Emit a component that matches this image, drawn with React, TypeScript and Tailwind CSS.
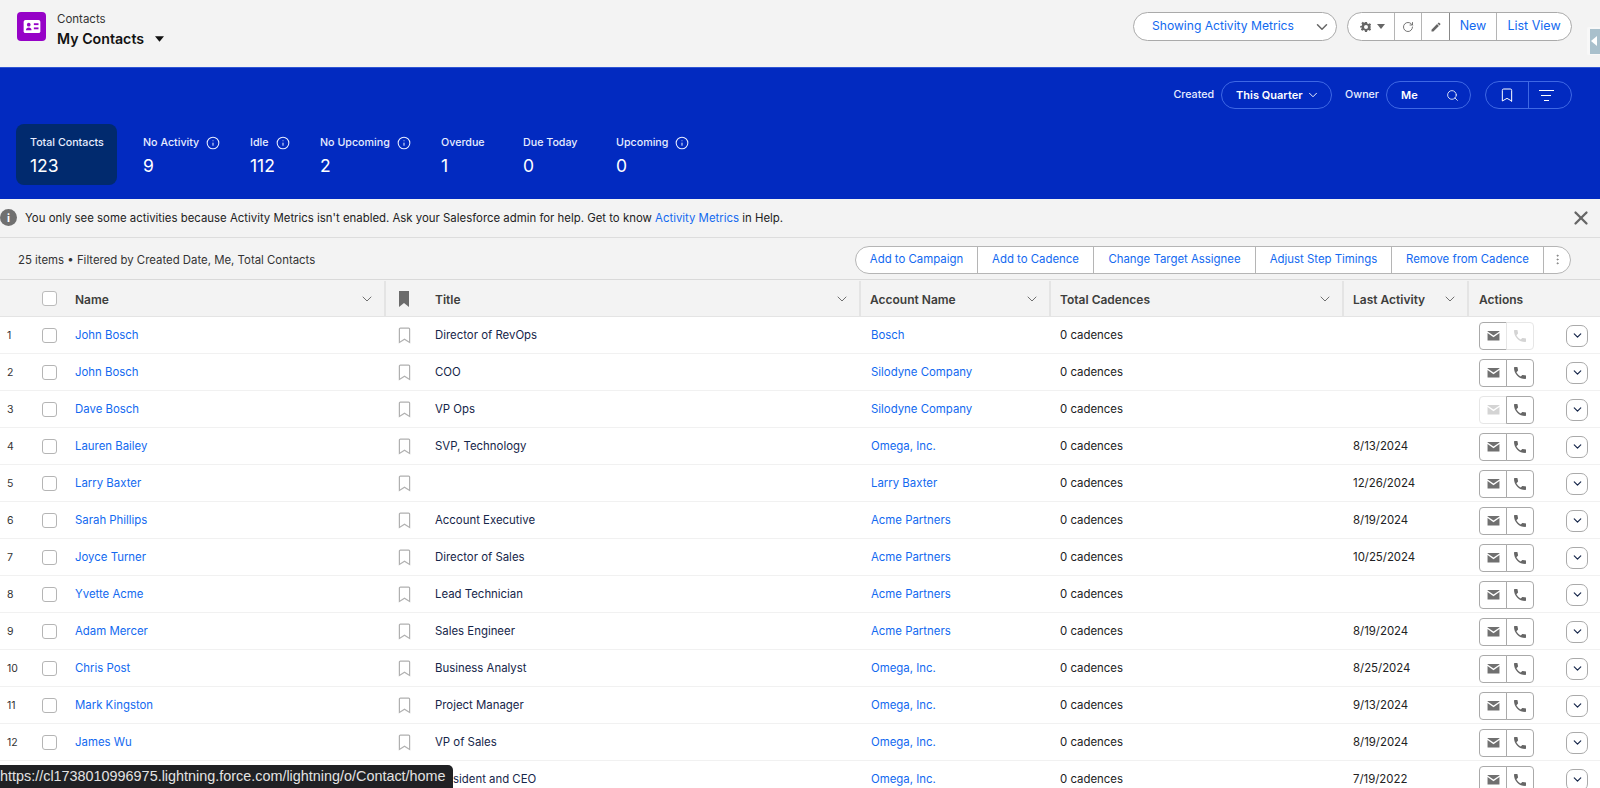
import { Bookmark, ChevronDown, Info, MoreVertical, RotateCw, Search, X } from "lucide-react";

const link = "text-[#1269f0]";
const cols = "grid grid-cols-[66px_318px_41px_434px_190px_293px_125px_133px]";

const rows = [
  { name: "John Bosch", title: "Director of RevOps", account: "Bosch", last: "", noPhone: true },
  { name: "John Bosch", title: "COO", account: "Silodyne Company", last: "" },
  { name: "Dave Bosch", title: "VP Ops", account: "Silodyne Company", last: "", noMail: true },
  { name: "Lauren Bailey", title: "SVP, Technology", account: "Omega, Inc.", last: "8/13/2024" },
  { name: "Larry Baxter", title: "", account: "Larry Baxter", last: "12/26/2024" },
  { name: "Sarah Phillips", title: "Account Executive", account: "Acme Partners", last: "8/19/2024" },
  { name: "Joyce Turner", title: "Director of Sales", account: "Acme Partners", last: "10/25/2024" },
  { name: "Yvette Acme", title: "Lead Technician", account: "Acme Partners", last: "" },
  { name: "Adam Mercer", title: "Sales Engineer", account: "Acme Partners", last: "8/19/2024" },
  { name: "Chris Post", title: "Business Analyst", account: "Omega, Inc.", last: "8/25/2024" },
  { name: "Mark Kingston", title: "Project Manager", account: "Omega, Inc.", last: "9/13/2024" },
  { name: "James Wu", title: "VP of Sales", account: "Omega, Inc.", last: "8/19/2024" },
  { name: "", title: "President and CEO", account: "Omega, Inc.", last: "7/19/2022" },
];

function Caret({ className }: { className: string }) {
  return (
    <svg viewBox="0 0 10 6" className={className} fill="currentColor">
      <path d="M0 0h10L5 6z" />
    </svg>
  );
}

function MailIcon({ className }: { className: string }) {
  return (
    <svg viewBox="0 0 24 24" className={className} fill="currentColor">
      <path d="M1 3.5h22v1.2L12 12 1 4.7z" />
      <path d="M1 7.5 12 15l11-7.500V21H1z" />
    </svg>
  );
}

function PhoneIcon({ className }: { className: string }) {
  return (
    <svg viewBox="0 0 24 24" className={className} fill="currentColor">
      <path d="M6.62 10.79c1.44 2.83 3.76 5.14 6.59 6.59l2.2-2.2c.27-.27.67-.36 1.02-.24 1.12.37 2.33.57 3.57.57.55 0 1 .45 1 1V20c0 .55-.45 1-1 1-9.39 0-17-7.61-17-17 0-.55.45-1 1-1h3.500c.55 0 1 .45 1 1 0 1.250.2 2.450.57 3.570.11.35.03.74-.25 1.020l-2.200 2.200z" />
    </svg>
  );
}

function GearIcon({ className }: { className: string }) {
  return (
    <svg viewBox="0 0 24 24" className={className} fill="currentColor">
      <path
        fillRule="evenodd"
        d="M10 2h4l.6 3 2.300 1 2.600-1.700 2.800 2.800L20.600 9.700l1 2.300-.1 0 .1 0 0 0-1 2.300 1.700 2.600-2.800 2.800-2.600-1.700-2.300 1-.6 3h-4l-.6-3-2.300-1-2.600 1.700-2.800-2.800 1.700-2.600-1-2.300L.4 14v-4l3-.6 1-2.300-1.700-2.600 2.800-2.800 2.600 1.700 2.300-1zM12 8a4 4 0 1 0 0 8 4 4 0 0 0 0-8z"
      />
    </svg>
  );
}

function PencilIcon({ className }: { className: string }) {
  return (
    <svg viewBox="0 0 24 24" className={className} fill="currentColor">
      <path d="M3 17.250V21h3.750L17.800 9.940l-3.750-3.750zM20.700 7.040a1 1 0 0 0 0-1.410l-2.340-2.340a1 1 0 0 0-1.410 0l-1.830 1.830 3.750 3.750z" />
    </svg>
  );
}

function BookmarkLine() {
  return (
    <svg viewBox="0 0 14 18" className="h-[17px] w-[13px]" fill="none" stroke="#b0b0b0" strokeWidth="1.300">
      <path d="M2.500 1h9a1 1 0 0 1 1 1v14.500L7 13l-5.500 3.500V2a1 1 0 0 1 1-1z" />
    </svg>
  );
}

function Stat({ label, value, info, className }: { label: string; value: string; info?: boolean; className: string }) {
  return (
    <div className={className}>
      <div className="flex h-[18px] items-center text-[10.700px] font-medium text-[#e8edff]">
        {label}
        {info ? <Info className="ml-[7px] h-[14px] w-[14px]" strokeWidth={1.800} /> : null}
      </div>
      <div className="mt-[2px] text-[17.500px] leading-[24px] text-white">{value}</div>
    </div>
  );
}

function ToolbarButton({ label, className }: { label: string; className: string }) {
  return (
    <div className={`flex h-full items-center justify-center border-r border-[#b5b5b5] text-[11.400px] ${link} ${className}`}>
      {label}
    </div>
  );
}

function HeadCell({ label, first }: { label: string; first?: boolean }) {
  return (
    <div className={`flex items-center justify-between pr-[9px] ${first ? "pl-[9px]" : "border-l-2 border-[#e4e4e4] pl-[9px]"}`}>
      <span className="pt-[2px] text-[12px] font-semibold text-[#3e3e3c]">{label}</span>
      <ChevronDown className="h-[16px] w-[16px] text-[#707070]" strokeWidth={1.500} />
    </div>
  );
}

export default function App() {
  return (
    <div className="relative h-[788px] w-[1600px] overflow-hidden bg-white font-['Inter',sans-serif] text-[#181818]">
      <header className="flex h-[67px] items-start justify-between bg-[#f3f3f3] pl-[17px] pr-[28px] pt-[12px]">
        <div className="flex">
          <div className="flex h-[29px] w-[29px] items-center justify-center rounded-[4px] bg-[#9602c7]">
            <svg viewBox="0 0 18 14" className="h-[13px] w-[18px]">
              <rect width="18" height="14" rx="2" fill="#fff" />
              <circle cx="5.500" cy="5" r="2" fill="#9602c7" />
              <path d="M2.500 11c0-2 1.300-3 3-3s3 1 3 3z" fill="#9602c7" />
              <rect x="11" y="3.500" width="5" height="2" fill="#9602c7" />
              <rect x="11" y="8" width="5" height="2" fill="#9602c7" />
            </svg>
          </div>
          <div className="ml-[11px]">
            <div className="pt-[1px] text-[11.500px] leading-[13px] text-[#333]">Contacts</div>
            <div className="mt-[3px] flex items-center text-[14.200px] font-semibold leading-[20px] text-[#111]">
              My Contacts
              <Caret className="ml-[11px] h-[6px] w-[9px]" />
            </div>
          </div>
        </div>
        <div className="flex items-center">
          <div className="flex h-[29px] w-[204px] items-center justify-between rounded-full border border-[#aaa] bg-white pl-[18px] pr-[5px]">
            <span className={`text-[12.100px] ${link}`}>Showing Activity Metrics</span>
            <ChevronDown className="h-[18px] w-[18px] text-[#666]" strokeWidth={2} />
          </div>
          <div className="ml-[10px] flex h-[29px] items-center overflow-hidden rounded-full border border-[#aaa] bg-white">
            <div className="flex h-full w-[47px] items-center justify-center gap-[5px] border-r border-[#b5b5b5] pl-[2px] text-[#666]">
              <GearIcon className="h-[12px] w-[12px]" />
              <Caret className="h-[5px] w-[8px]" />
            </div>
            <div className="flex h-full w-[27px] items-center justify-center border-r border-[#b5b5b5] text-[#666]">
              <RotateCw className="h-[12px] w-[12px]" strokeWidth={1.800} />
            </div>
            <div className="flex h-full w-[28px] items-center justify-center border-r border-[#888] text-[#666]">
              <PencilIcon className="h-[12px] w-[12px]" />
            </div>
            <div className={`flex h-full w-[47px] items-center justify-center border-r border-[#b5b5b5] text-[12.500px] ${link}`}>New</div>
            <div className={`flex h-full w-[74px] items-center justify-center text-[12.500px] ${link}`}>List View</div>
          </div>
        </div>
      </header>
      <div className="absolute right-0 top-[27px] flex h-[28px] w-[13px] items-center rounded-l-[2px] bg-[#f8f8f8] pl-[3px]">
        <div className="flex h-[25px] w-[10px] items-center bg-[#a9c0cc]">
          <div className="ml-[1px] h-0 w-0 border-y-[5px] border-r-[6px] border-y-transparent border-r-white" />
        </div>
      </div>

      <section className="h-[132px] border-t border-[#2f55d4] bg-[#022ac0]">
        <div className="flex h-[56px] items-start justify-end pr-[28px] pt-[13px] text-white">
          <div className="flex h-[28px] items-center">
            <span className="text-[10.700px] font-medium text-[#e8edff]">Created</span>
            <div className="ml-[7px] flex h-[28px] w-[111px] items-center justify-between rounded-full border border-[#3f68e4] pl-[14px] pr-[11px]">
              <span className="text-[11px] font-semibold">This Quarter</span>
              <ChevronDown className="h-[14px] w-[14px]" strokeWidth={1.600} />
            </div>
            <span className="ml-[13px] text-[10.700px] font-medium text-[#e8edff]">Owner</span>
            <div className="ml-[7px] flex h-[28px] w-[85px] items-center justify-between rounded-full border border-[#3f68e4] pl-[14px] pr-[11px]">
              <span className="text-[11px] font-semibold">Me</span>
              <Search className="h-[13px] w-[13px]" strokeWidth={1.500} />
            </div>
            <div className="ml-[14px] flex h-[28px] w-[87px] items-center rounded-full border border-[#3f68e4]">
              <div className="flex h-full w-[43px] items-center justify-center border-r border-[#3f68e4]">
                <Bookmark className="h-[16px] w-[16px]" strokeWidth={1.500} />
              </div>
              <div className="flex flex-1 flex-col items-center gap-[4px] pr-[8px]">
                <span className="h-px w-[15px] bg-white" />
                <span className="h-px w-[10px] bg-white" />
                <span className="h-px w-[5px] bg-white" />
              </div>
            </div>
          </div>
        </div>
        <div className="flex pl-[16px]">
          <Stat label="Total Contacts" value="123" className="h-[61px] w-[101px] rounded-[8px] bg-[#012a6e] pl-[14px] pt-[10px]" />
          <Stat label="No Activity" value="9" info className="ml-[26px] w-[107px] pt-[10px]" />
          <Stat label="Idle" value="112" info className="w-[70px] pt-[10px]" />
          <Stat label="No Upcoming" value="2" info className="w-[121px] pt-[10px]" />
          <Stat label="Overdue" value="1" className="w-[82px] pt-[10px]" />
          <Stat label="Due Today" value="0" className="w-[93px] pt-[10px]" />
          <Stat label="Upcoming" value="0" info className="pt-[10px]" />
        </div>
      </section>

      <div className="flex h-[39px] items-center justify-between border-b border-[#ddd] bg-[#f3f3f3] pr-[8px] text-[11.400px] text-[#222]">
        <div className="flex items-center">
          <div className="flex h-[17px] w-[17px] items-center justify-center rounded-full bg-[#707070] text-[11px] font-bold text-white">i</div>
          <span className="ml-[8px] pt-[2px]">
            You only see some activities because Activity Metrics isn't enabled. Ask your Salesforce admin for help. Get to know{" "}
            <span className={link}>Activity Metrics</span> in Help.
          </span>
        </div>
        <X className="h-[22px] w-[22px] text-[#666]" strokeWidth={2.500} />
      </div>

      <div className="flex h-[42px] items-center justify-between border-b border-[#d9d9d9] bg-[#f3f3f3] pl-[18px] pr-[29px] pt-[2px]">
        <span className="pt-[2px] text-[11.400px] text-[#333]">25 items • Filtered by Created Date, Me, Total Contacts</span>
        <div className="flex h-[28px] items-center overflow-hidden rounded-full border border-[#b5b5b5] bg-white">
          <ToolbarButton label="Add to Campaign" className="w-[122px]" />
          <ToolbarButton label="Add to Cadence" className="w-[116px]" />
          <ToolbarButton label="Change Target Assignee" className="w-[162px]" />
          <ToolbarButton label="Adjust Step Timings" className="w-[136px]" />
          <ToolbarButton label="Remove from Cadence" className="w-[152px]" />
          <div className="flex h-full w-[26px] items-center justify-center">
            <MoreVertical className="h-[13px] w-[13px] text-[#777]" strokeWidth={1.500} />
          </div>
        </div>
      </div>

      <div className={`${cols} h-[37px] border-b border-[#e4e4e4] bg-[#f3f3f3] pt-[1px]`}>
        <div className="flex items-center pl-[42px]">
          <span className="h-[15px] w-[15px] rounded-[3px] border border-[#bbb] bg-white" />
        </div>
        <HeadCell label="Name" first />
        <div className="flex items-center justify-center border-l-2 border-[#e4e4e4] pr-[3px]">
          <svg viewBox="0 0 10 16" className="h-[16px] w-[10px]" fill="#6b6b6b">
            <path d="M0 0h10v16l-5-4-5 4z" />
          </svg>
        </div>
        <div className="flex items-center justify-between pl-[10px] pr-[9px]">
          <span className="pt-[2px] text-[12px] font-semibold text-[#3e3e3c]">Title</span>
          <ChevronDown className="h-[16px] w-[16px] text-[#707070]" strokeWidth={1.500} />
        </div>
        <HeadCell label="Account Name" />
        <HeadCell label="Total Cadences" />
        <HeadCell label="Last Activity" />
        <div className="flex items-center border-l-2 border-[#e4e4e4] pl-[10px] pt-[2px] text-[12px] font-semibold text-[#3e3e3c]">Actions</div>
      </div>

      {rows.map((row, i) => (
        <div key={i} className={`${cols} h-[37px] items-center border-b border-[#f1f1f1] pt-[1px] text-[11.400px]`}>
          <div className="flex items-center">
            <span className="w-[42px] pl-[7px] text-[10.500px] text-[#333]">{i < 12 ? i + 1 : ""}</span>
            <span className="h-[15px] w-[15px] rounded-[3px] border border-[#b5b5b5] bg-white" />
          </div>
          <div className={`pl-[9px] ${link}`}>{row.name}</div>
          <div className="flex justify-center">
            <BookmarkLine />
          </div>
          <div className="pl-[10px] text-[#16264a]">{row.title}</div>
          <div className={`pl-3 ${link}`}>{row.account}</div>
          <div className="pl-[11px] text-[#222]">0 cadences</div>
          <div className="pl-[11px] text-[#222]">{row.last}</div>
          <div className="flex items-center pl-[12px]">
            <div className={`flex h-[28px] w-[28px] items-center justify-center rounded-l-[4px] border ${row.noMail ? "border-[#e6e6e6] text-[#d4d4d4]" : "border-[#aaa] text-[#707070]"}`}>
              <MailIcon className="h-[13px] w-[13px]" />
            </div>
            <div className={`-ml-px flex h-[28px] w-[28px] items-center justify-center rounded-r-[4px] border ${row.noPhone ? "border-[#e6e6e6] text-[#d4d4d4]" : "border-[#aaa] text-[#666]"}`}>
              <PhoneIcon className="h-[16px] w-[16px]" />
            </div>
            <div className="ml-[32px] flex h-[22px] w-[22px] items-center justify-center rounded-[7px] border border-[#aaa]">
              <ChevronDown className="h-[13px] w-[13px] text-[#16264a]" strokeWidth={2.200} />
            </div>
          </div>
        </div>
      ))}

      <div className="absolute bottom-0 left-0 flex h-[23px] w-[453px] items-center overflow-hidden rounded-tr-[5px] bg-[#202124] font-['Liberation_Sans',sans-serif] text-[14.400px] text-[#e3e3e3]">
        <span className="whitespace-nowrap">https://cl1738010996975.lightning.force.com/lightning/o/Contact/home</span>
      </div>
    </div>
  );
}
